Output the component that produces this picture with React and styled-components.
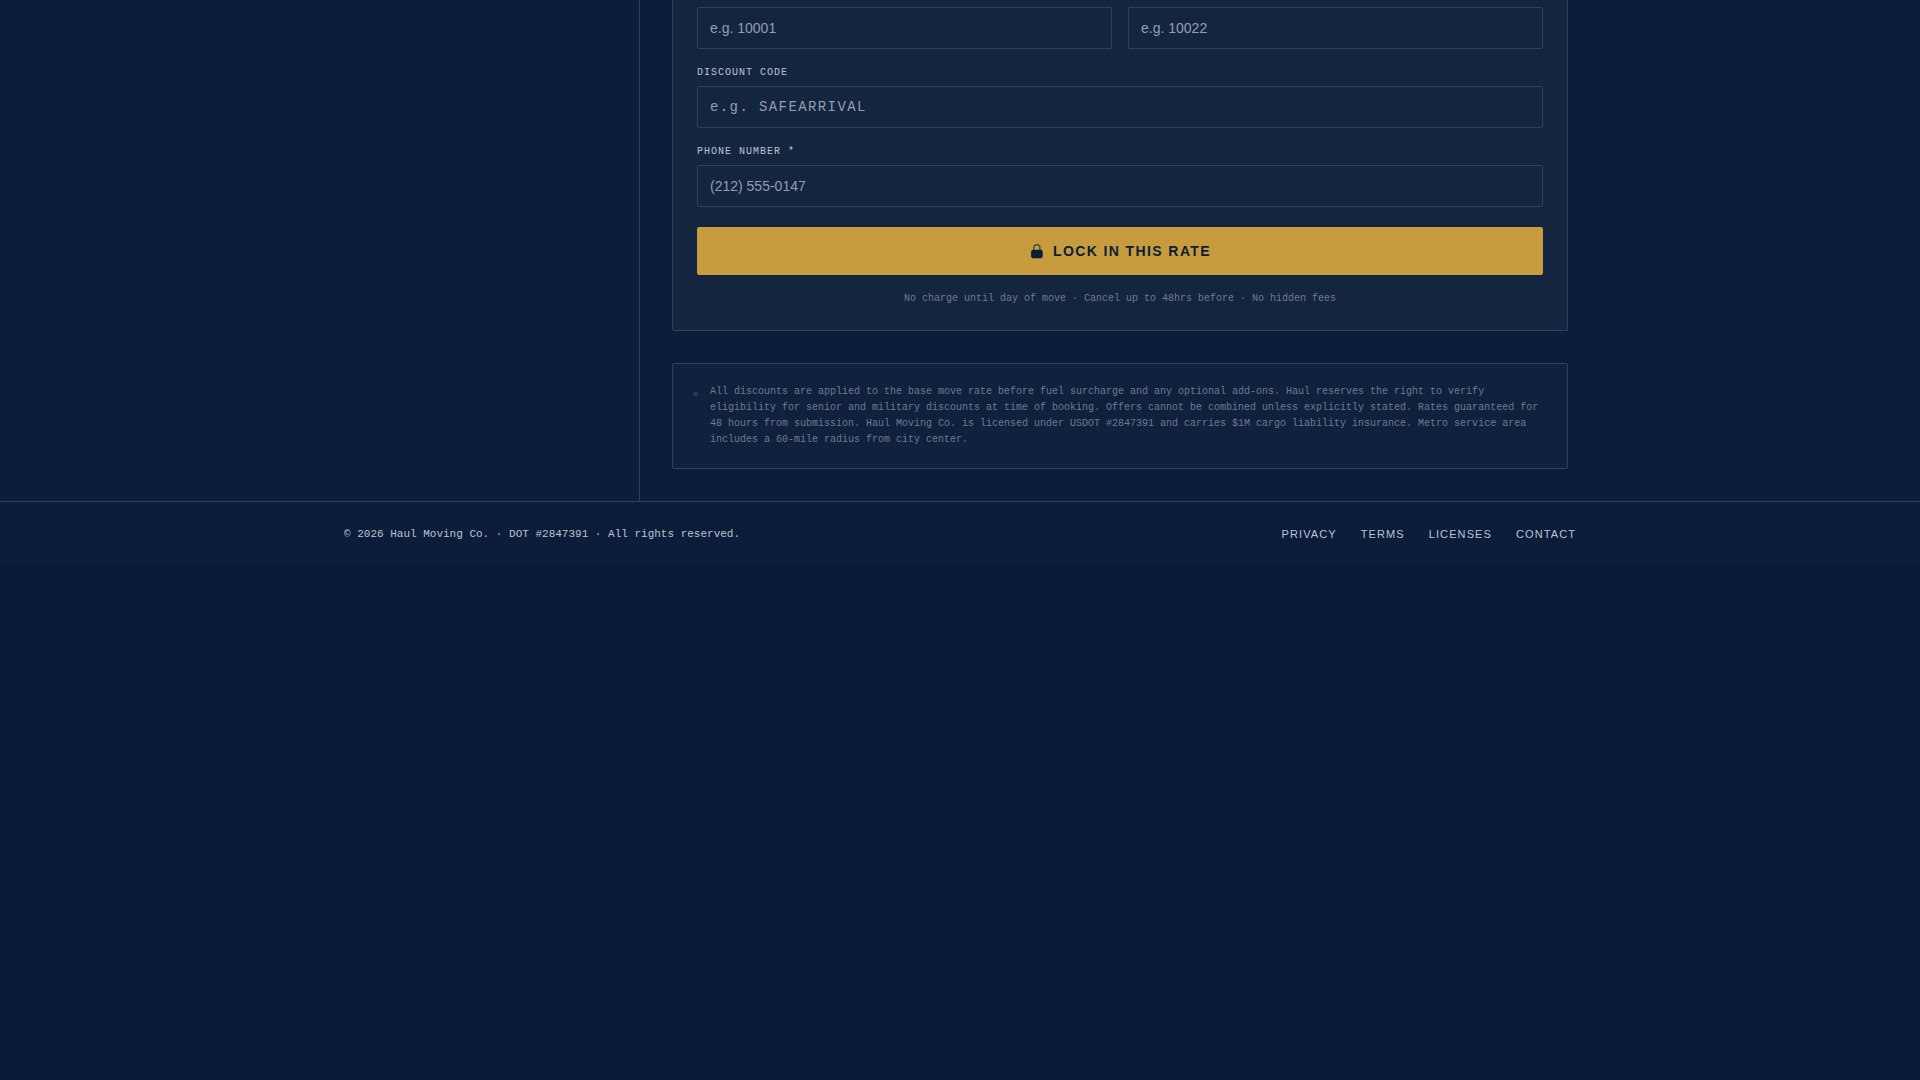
import React from "react";
import styled, { createGlobalStyle } from "styled-components";

const sans = `"Liberation Sans", Arial, sans-serif`;
const mono = `"Liberation Mono", "Courier New", monospace`;
const navy = "#0b1d3a";
const line = "#30405c";
const pale = "#bdc4d0";
const muted = "#6e7b91";

const GlobalStyle = createGlobalStyle`
  *, *::before, *::after { box-sizing: border-box; }
  body {
    margin: 0;
    background: #071838;
    color: ${pale};
    font-family: ${sans};
  }
`;

const Page = styled.div`
  background: ${navy};
`;

const Columns = styled.div`
  display: grid;
  grid-template-columns: 320px minmax(0, 1fr);
  max-width: 1280px;
  margin: 0 auto;
`;

const Sidebar = styled.aside`
  border-right: 1px solid ${line};
`;

const Main = styled.main`
  display: flex;
  flex-direction: column;
  gap: 32px;
  padding: 0 32px 32px;
`;

const FormCard = styled.form`
  display: flex;
  flex-direction: column;
  gap: 16px;
  padding: 7px 24px 24px;
  background: #142540;
  border: 1px solid ${line};
  border-top: 0;
  border-radius: 0 0 2px 2px;
`;

const FieldRow = styled.div`
  display: grid;
  grid-template-columns: 1fr 1fr;
  gap: 16px;
`;

const Field = styled.div`
  display: flex;
  flex-direction: column;
  gap: 6px;
`;

const Label = styled.label`
  font: 10px/15px ${mono};
  letter-spacing: 0.1em;
  text-transform: uppercase;
`;

const Input = styled.input`
  width: 100%;
  height: 42px;
  padding: 0 12px;
  background: transparent;
  border: 1px solid ${line};
  border-radius: 2px;
  color: #ffffff;
  font-family: ${(p) => (p.$code ? mono : sans)};
  font-size: 14px;
  letter-spacing: ${(p) => (p.$code ? "0.1em" : "normal")};

  &::placeholder {
    color: #959eae;
    opacity: 1;
  }
`;

const SubmitButton = styled.button`
  display: flex;
  align-items: center;
  justify-content: center;
  gap: 10px;
  height: 48px;
  margin-top: 4px;
  padding: 0;
  background: #c79c3e;
  border: 0;
  border-radius: 2px;
  color: ${navy};
  font: bold 14px/20px ${sans};
  letter-spacing: 0.1em;
  text-transform: uppercase;
  cursor: pointer;
`;

const Assurance = styled.p`
  margin: 0;
  color: ${muted};
  font: 10px/15px ${mono};
  text-align: center;
`;

const Notice = styled.section`
  display: flex;
  gap: 12px;
  padding: 20px;
  background: #0f213d;
  border: 1px solid ${line};
  border-radius: 2px;
`;

const NoticeMark = styled.svg`
  flex: none;
  width: 5px;
  height: 20px;
`;

const NoticeText = styled.p`
  margin: 0;
  color: ${muted};
  font: 10px/16px ${mono};
`;

const Footer = styled.footer`
  border-top: 1px solid ${line};
`;

const FooterInner = styled.div`
  display: flex;
  align-items: center;
  justify-content: space-between;
  max-width: 1280px;
  margin: 0 auto;
  padding: 24px;
`;

const Copyright = styled.p`
  margin: 0;
  font: 11px/17px ${mono};
`;

const FooterNav = styled.nav`
  display: flex;
  gap: 24px;
`;

const FooterLink = styled.a`
  color: ${pale};
  font: 11px/17px ${sans};
  letter-spacing: 0.1em;
  text-decoration: none;
  text-transform: uppercase;
`;

function LockIcon() {
  return (
    <svg width="14" height="16" viewBox="0 0 14 16" fill="none" aria-hidden="true">
      <path d="M4.8 8V4.8a3.1 3.1 0 0 1 6.2 0V8" stroke="#4d4a38" strokeWidth="1.4" />
      <rect x="2.1" y="6.8" width="11.6" height="8.4" rx="2" fill={navy} />
    </svg>
  );
}

const links = ["Privacy", "Terms", "Licenses", "Contact"];

export default function App() {
  return (
    <>
      <GlobalStyle />
      <Page>
        <Columns>
          <Sidebar />
          <Main>
            <FormCard onSubmit={(e) => e.preventDefault()}>
              <FieldRow>
                <Input aria-label="From ZIP" placeholder="e.g. 10001" />
                <Input aria-label="To ZIP" placeholder="e.g. 10022" />
              </FieldRow>
              <Field>
                <Label htmlFor="code">Discount code</Label>
                <Input id="code" $code placeholder="e.g. SAFEARRIVAL" />
              </Field>
              <Field>
                <Label htmlFor="phone">Phone number *</Label>
                <Input id="phone" type="tel" required placeholder="(212) 555-0147" />
              </Field>
              <SubmitButton type="submit">
                <LockIcon />
                Lock in this rate
              </SubmitButton>
              <Assurance>
                No charge until day of move · Cancel up to 48hrs before · No hidden fees
              </Assurance>
            </FormCard>
            <Notice>
              <NoticeMark viewBox="0 0 5 20" aria-hidden="true">
                <circle cx="2.5" cy="10" r="2.4" fill="#2a3a56" />
              </NoticeMark>
              <NoticeText>
                All discounts are applied to the base move rate before fuel surcharge and any
                optional add-ons. Haul reserves the right to verify eligibility for senior and
                military discounts at time of booking. Offers cannot be combined unless
                explicitly stated. Rates guaranteed for 48 hours from submission. Haul Moving
                Co. is licensed under USDOT #2847391 and carries $1M cargo liability insurance.
                Metro service area includes a 60-mile radius from city center.
              </NoticeText>
            </Notice>
          </Main>
        </Columns>
        <Footer>
          <FooterInner>
            <Copyright>© 2026 Haul Moving Co. · DOT #2847391 · All rights reserved.</Copyright>
            <FooterNav>
              {links.map((name) => (
                <FooterLink key={name} href={`#${name.toLowerCase()}`}>
                  {name}
                </FooterLink>
              ))}
            </FooterNav>
          </FooterInner>
        </Footer>
      </Page>
    </>
  );
}
